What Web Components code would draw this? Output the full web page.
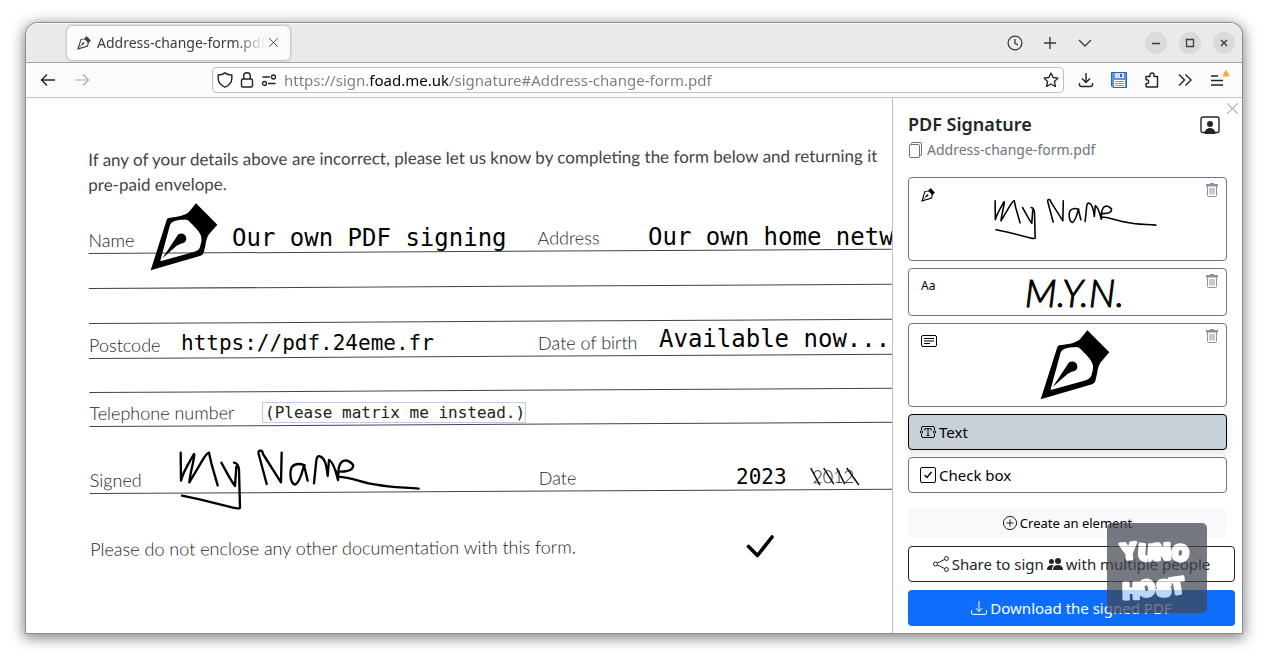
<!DOCTYPE html>
<html lang="en">
<head>
<meta charset="utf-8">
<title>PDF Signature</title>
<style>
  html { height: 100%; }
  body {
    margin: 0; height: 100%; box-sizing: border-box; padding: 23px 26px 29px;
    background: #fff; color: #212529; overflow: hidden;
    font: 15px/20px "Noto Sans", "Open Sans", sans-serif;
  }
</style>
</head>
<body>
<browser-window>
  <tab-strip slot="tabs"></tab-strip>
  <nav-bar slot="nav"></nav-bar>
  <pdf-page slot="page">
    <placed-item style="left:124px;top:105px"><ui-icon name="nib" style="--w:68px"></ui-icon></placed-item>
    <placed-item class="l" style="left:206px;top:126px">Our own PDF signing</placed-item>
    <placed-item class="l" style="left:622px;top:125px">Our own home netw</placed-item>
    <placed-item class="m" style="left:155px;top:231px">https://pdf.24eme.fr</placed-item>
    <placed-item class="l" style="left:633px;top:227px">Available now...</placed-item>
    <placed-item style="left:236px;top:304px"><text-note value="(Please matrix me instead.)"></text-note></placed-item>
    <placed-item style="left:153px;top:352px"><hand-signature style="--w:240px"></hand-signature></placed-item>
    <placed-item class="m" style="left:710px;top:365px">2023</placed-item>
    <placed-item style="left:719px;top:434px"><ui-icon name="tick" style="--w:30px"></ui-icon></placed-item>
  </pdf-page>
  <sign-panel slot="side"></sign-panel>
</browser-window>

<script>
const ICONS = {
  nib: ['270 218 204 204', '<path fill="currentColor" fill-rule="evenodd" d="M272 420 321 266Q324 262 332 262C352 260 372 257 386 246L408 219 472 283 447 312C440 322 438 334 436 346L431 367Q429 373 422 376ZM301 391C302 393 306 392 312 390L401 365Q418 360 420 350L424 334Q426 320 421 312C416 300 400 286 389 274Q383 267 372 268C350 268 334 272 330 284Z"/><path fill="currentColor" d="M307 384 350 319A15 15 0 0 1 378 320 15 15 0 0 1 372 337Q360 340 350 346Z"/>'],
  close: ['0 0 10 10', '<path d="M.3.3 9.7 9.7M9.7.3.3 9.7"/>'],
  wclose: ['0 0 10 10', '<path stroke-width="1.4" d="M2 2 8 8M8 2 2 8"/>'],
  wmin: ['0 0 10 10', '<path stroke-width="1.3" d="M1 5.5H9"/>'],
  wmax: ['0 0 10 10', '<path stroke-width="1.3" d="M1.5 1.5H8.5V8.5H1.5Z"/>'],
  back: ['0 0 16 16', '<path stroke-width="1.4" d="M1.5 8H15M7 2.5 1.5 8 7 13.5"/>'],
  forward: ['0 0 16 16', '<path stroke-width="1.2" d="M1 8H14.5M9 2.5 14.5 8 9 13.5"/>'],
  clock: ['0 0 16 16', '<circle stroke-width="1.3" cx="8" cy="8" r="6.9"/><path stroke-width="1.3" d="M8 4V8.3L11 10"/>'],
  plus: ['0 0 16 16', '<path stroke-width="1.4" d="M8 2V14M2 8H14"/>'],
  down: ['0 0 16 16', '<path stroke-width="1.4" d="M2 5 8 11 14 5"/>'],
  shield: ['0 0 16 16', '<path stroke-width="1.4" d="M8 .9C6 2.5 3.5 3 1.2 3V7C1.5 11 4 13.5 8 15.2C12 13.5 14.5 11 14.8 7V3C12.5 3 10 2.5 8 .9Z"/>'],
  lock: ['0 0 16 16', '<rect stroke-width="1.4" x="2.5" y="7" width="11" height="8" rx="1.5"/><path stroke-width="1.4" d="M4.7 7V4A3.3 3.3 0 0 1 11.3 4V7"/>'],
  perms: ['0 0 16 16', '<path stroke-width="1.3" d="M1.500 5H9M7 11.5H14.5"/><circle stroke-width="1.3" cx="12.5" cy="5" r="2"/><circle stroke-width="1.3" cx="3.5" cy="11.5" r="2"/>'],
  star: ['0 0 16 16', '<path stroke-width="1.3" stroke-linejoin="round" d="M8 1 10.1 5.5 15 6.1 11.4 9.5 12.4 14.5 8 12 3.6 14.5 4.6 9.5 1 6.1 5.9 5.5Z"/>'],
  save: ['0 0 16 16', '<path stroke-width="1.4" d="M8 1V10.5M4 6.5 8 10.5 12 6.5M1.500 11V13A2 2 0 0 0 3.500 14.500H12.500A2 2 0 0 0 14.500 13V11"/>'],
  floppy: ['0 0 16 16', '<path fill="#5b92e5" stroke="#2a62c0" d="M.5.5H15.5V15.5H2L.5 14Z"/><rect stroke="none" x="4" y="1" width="9" height="5" fill="#d3e0f5"/><rect stroke="none" x="9" y="2" width="2" height="3" fill="#2a62c0"/><rect stroke="none" x="3" y="8" width="11" height="7" fill="#fff"/><path stroke="#999" d="M4 9.500H13M4 11.500H13M4 13.500H13"/>'],
  puzzle: ['0 0 16 16', '<path stroke-width="1.4" stroke-linejoin="round" d="M2 4.5H6V3A2 2 0 0 1 10 3V4.5H13.5V15H3Q2 15 2 14V11.5H3.5A2 2 0 0 0 3.500 7.800H2Z"/>'],
  more: ['0 0 16 16', '<path stroke-width="1.4" d="M2 2.5 7.5 8 2 13.5M8.5 2.5 14 8 8.5 13.5"/>'],
  menu: ['0 0 20 16', '<path stroke-width="1.5" d="M1 4H8M1 8.5H13M1 13H13"/><path fill="#ffa436" stroke="#ffa436" stroke-linejoin="round" d="M13 4 16 -1.500 19 4Z"/>'],
  person: ['0 0 20 18', '<rect stroke-width="1.4" x="1" y="1" width="18" height="15.5" rx="1.8"/><circle fill="currentColor" cx="10" cy="8" r="3"/><path fill="currentColor" d="M4.500 18C4.500 13.500 8 12 10 12S15.500 13.500 15.500 18Z"/>'],
  files: ['0 0 16 16', '<path fill="currentColor" d="M13 0H6a2 2 0 0 0-2 2 2 2 0 0 0-2 2v10a2 2 0 0 0 2 2h7a2 2 0 0 0 2-2 2 2 0 0 0 2-2V2a2 2 0 0 0-2-2m0 13V4a2 2 0 0 0-2-2H5a1 1 0 0 1 1-1h7a1 1 0 0 1 1 1v10a1 1 0 0 1-1 1M3 4a1 1 0 0 1 1-1h7a1 1 0 0 1 1 1v10a1 1 0 0 1-1 1H4a1 1 0 0 1-1-1z" transform="translate(-1 0)"/>'],
  trash: ['0 0 14 16', '<path fill="currentColor" d="M1 2H5V1H9V2H13V4.500H1Z"/><path d="M2.500 4V13.5Q2.500 14.500 3.500 14.500H10.500Q11.500 14.500 11.500 13.500V4M5 6V12.500M7 6V12.500M9 6V12.500"/>'],
  card: ['0 0 16 16', '<rect x=".5" y="2.5" width="15" height="11" rx="1.5"/><path d="M3 5.5H13M3 8H13M3 10.5H9"/>'],
  textarea: ['0 0 16 16', '<path d="M1.5 6V4Q1.5 2.5 3 2.5H13Q14.5 2.5 14.5 4V6M1.5 10V12Q1.5 13.5 3 13.5H13Q14.5 13.5 14.5 12V10"/><circle cx="1.5" cy="8" r="1.2"/><circle cx="14.5" cy="8" r="1.2"/><path d="M4.800 6.500V4.700H11.200V6.500M8 4.700V11.500M6.500 11.500H9.500"/>'],
  check: ['0 0 16 16', '<rect x=".5" y=".5" width="15" height="15" rx="1.5"/><path stroke-width="1.4" d="M4.5 8 7 10.5 11.5 5"/>'],
  circleplus: ['0 0 16 16', '<circle cx="8" cy="8" r="7.5"/><path d="M8 4V12M4 8H12"/>'],
  share: ['0 0 16 16', '<circle cx="13.5" cy="2.5" r="2"/><circle cx="13.5" cy="13.5" r="2"/><circle cx="2.5" cy="8" r="2"/><path d="M4.3 7.1 11.7 3.4M4.3 8.9 11.7 12.6"/>'],
  people: ['0 0 16 16', '<path fill="currentColor" d="M7 14s-1 0-1-1 1-4 5-4 5 3 5 4-1 1-1 1zm4-6a3 3 0 1 0 0-6 3 3 0 0 0 0 6m-5.784 6A2.240 2.240 0 0 1 5 13c0-1.355.68-2.750 1.936-3.720A6.300 6.300 0 0 0 5 9c-4 0-5 3-5 4s1 1 1 1zM4.500 8a2.500 2.500 0 1 0 0-5 2.500 2.500 0 0 0 0 5"/>'],
  download: ['0 0 16 16', '<path stroke-linecap="round" d="M.5 10.4V12.9A1.5 1.5 0 0 0 2 14.4H14A1.5 1.5 0 0 0 15.5 12.9V10.4M8 1.5V11.3M4.9 8.3 8 11.4 11.1 8.3"/>'],
  tick: ['0 0 30 30', '<path stroke-width="3.6" stroke-linecap="round" stroke-linejoin="round" d="M3.5 14.5 12.5 23.5 27 5"/>'],
};

function define(name, html, init) {
  customElements.define(name, class extends HTMLElement {
    connectedCallback() {
      if (this.shadowRoot) return;
      const t = document.createElement('template');
      t.innerHTML = typeof html === 'function' ? html(this) : html;
      this.attachShadow({ mode: 'open' }).append(t.content.cloneNode(true));
      if (init) init(this);
    }
  });
}
const RESET = `*{box-sizing:border-box} button{font:inherit;color:inherit;background:none;border:0;padding:0;margin:0;display:inline-flex;align-items:center;justify-content:center}`;

define('ui-icon', el => {
  const [box, body] = ICONS[el.getAttribute('name')];
  return `<style>:host{display:inline-block;flex:none;line-height:0} svg{display:block;width:var(--w,16px);height:auto;overflow:visible}</style>
  <svg viewBox="${box}" fill="none" stroke="currentColor" aria-hidden="true">${body.replace(/<(path|circle) fill="currentColor"/g, '<$1 stroke="none" fill="currentColor"')}</svg>`;
});

/* Free-hand ink of the saved signature. */
define('hand-signature', `<style>:host{display:block} svg{display:block;width:var(--w);height:auto;overflow:visible}</style>
<svg viewBox="358 60 720 180" fill="none" stroke="#000" stroke-width="7" stroke-linecap="round" stroke-linejoin="round" role="img" aria-label="Signature">
<path d="M363 68 364 152C370 125 390 95 403 72L404 76C400 105 392 125 389 157L430 88Q444 66 448 68L455 100 474 166M485 98C500 125 515 155 526 168L530 110M523 98Q536 100 538 120L541 234Q535 237 520 233L420 208 367 197M621 162 597 72Q595 62 602 62T610 72L664 157 666 68M735 106Q708 96 696 112C689 128 692 160 706 164C718 160 728 126 733 106L744 152M763 160 770 92Q772 74 783 80C795 86 800 100 804 138L808 90Q822 96 835 150L837 116C842 88 862 84 880 104Q884 124 843 125M828 122 834 140C880 142 905 158 950 164C990 172 1030 172 1077 176"/></svg>`);

define('placed-item', `<style>
:host{position:absolute;white-space:nowrap;color:#000;font-family:"DejaVu Sans Mono",monospace;line-height:28px}
:host(.l){font-size:24px} :host(.m){font-size:21px}</style><slot></slot>`);

define('text-note', el => `<style>:host{display:block}
input{display:block;box-sizing:border-box;width:264px;height:21px;margin:0;padding:0 2px;border:1px solid #b8cdf0;background:#fff;color:#222;font:16px/18px "DejaVu Sans Mono",monospace;outline:0}</style>
<input type="text" aria-label="Text element" value="${el.getAttribute('value')}">`);

define('browser-window', `<style>
:host{display:flex;flex-direction:column;height:100%;box-sizing:border-box;border-radius:12px 12px 0 0;overflow:hidden;background:#fff;position:relative;
 box-shadow:0 0 0 1px #8f8f8f,0 3px 14px 2px rgba(0,0,0,.5)}
main{flex:1;display:flex;min-height:0}
::slotted([slot=page]){flex:1;min-width:0} ::slotted([slot=side]){flex:none}
</style><slot name="tabs"></slot><slot name="nav"></slot><main><slot name="page"></slot><slot name="side"></slot></main><yuno-badge></yuno-badge>`);

define('tab-strip', `<style>${RESET}
:host{display:flex;align-items:center;height:40px;box-sizing:border-box;background:#eaeaea;border-bottom:1px solid #a3a3a3;box-shadow:inset 0 1px #f8f8f8;padding:0 7px 0 41px;color:#3c3c3c}
.tab{display:flex;align-items:center;width:223px;height:34px;padding:0 12px 0 10px;gap:6px;background:#fbfbfb;border-radius:5px;box-shadow:0 0 3px rgba(0,0,0,.4);font-size:14px}
.t{flex:1;min-width:0;overflow:hidden;white-space:nowrap;line-height:18px;-webkit-mask-image:linear-gradient(90deg,#000 82%,transparent);mask-image:linear-gradient(90deg,#000 82%,transparent)}
.x{margin-left:-3px;width:10px}
.r{margin-left:auto;display:flex;align-items:center;gap:19px}
.w{display:flex;gap:12px;margin-left:33px}
.w button{width:22px;height:22px;border-radius:50%;background:#dadada}
</style>
<div class="tab"><ui-icon name="nib" style="--w:14px"></ui-icon><span class="t">Address-change-form.pdf</span><button class="x" aria-label="Close tab"><ui-icon name="close" style="--w:9px"></ui-icon></button></div>
<div class="r"><button aria-label="Recent"><ui-icon name="clock"></ui-icon></button><button aria-label="New tab"><ui-icon name="plus"></ui-icon></button><button aria-label="List tabs"><ui-icon name="down"></ui-icon></button>
<div class="w"><button aria-label="Minimise"><ui-icon name="wmin" style="--w:10px"></ui-icon></button><button aria-label="Maximise"><ui-icon name="wmax" style="--w:10px"></ui-icon></button><button aria-label="Close"><ui-icon name="wclose" style="--w:10px"></ui-icon></button></div></div>`);

define('nav-bar', `<style>${RESET}
:host{display:flex;align-items:center;height:35px;box-sizing:border-box;background:#fbfbfb;border-bottom:1px solid #c3c3c3;padding:0 12px 0 14px;color:#222}
.b{display:flex;gap:18px;margin-right:122px} .f{color:#aaa}
.u{flex:1;display:flex;align-items:center;gap:6px;height:26px;padding:0 4px;border:1px solid #c0c0c0;border-radius:4px;background:#fff}
input{flex:1;min-width:0;border:0;padding:0;margin:0 0 0 1px;outline:0;font:inherit;height:22px;color:transparent;
 background:linear-gradient(90deg,#7b7b7b 85px,#000 85px 165px,#7b7b7b 165px);-webkit-background-clip:text;background-clip:text}
.r{display:flex;gap:17px;margin-left:14px}
</style>
<div class="b"><button aria-label="Back"><ui-icon name="back"></ui-icon></button><button class="f" aria-label="Forward"><ui-icon name="forward"></ui-icon></button></div>
<div class="u"><ui-icon name="shield"></ui-icon><ui-icon name="lock"></ui-icon><ui-icon name="perms"></ui-icon><input type="text" aria-label="Address" value="https://sign.foad.me.uk/signature#Address-change-form.pdf"><button aria-label="Bookmark"><ui-icon name="star"></ui-icon></button></div>
<div class="r"><button aria-label="Downloads"><ui-icon name="save"></ui-icon></button><button aria-label="Save page"><ui-icon name="floppy"></ui-icon></button><button aria-label="Extensions"><ui-icon name="puzzle"></ui-icon></button><button aria-label="More tools"><ui-icon name="more"></ui-icon></button><button aria-label="Menu"><ui-icon name="menu" style="--w:20px"></ui-icon></button></div>`);

/* The scan lies slightly askew on the page. */
define('pdf-page', `<style>
:host{display:block;position:relative;overflow:hidden;background:#fff}
.scan{padding:49px 0 0;margin-left:63px;transform:rotate(-.3deg);transform-origin:0 50%;color:#222;font:300 18px/25px Lato,sans-serif;white-space:nowrap}
p{margin:0;height:50px;font-size:17px;font-weight:400;color:#444}
.row{display:grid;grid-template-columns:449px 1fr;align-items:end;height:35px;box-sizing:border-box;border-bottom:1px solid #444}
.row.first{height:57px}.row.low{height:34px}.row.tall{height:67px}
.old{position:relative;margin-left:236px}
svg{position:absolute;left:0;top:0;overflow:visible}
.c{display:flex}
footer{margin-top:43px}
</style>
<div class="scan">
<p>If any of your details above are incorrect, please let us know by completing the form below and returning it<br>pre-paid envelope.</p>
<div class="row first"><span>Name</span><span>Address</span></div>
<div class="row"></div><div class="row"></div>
<div class="row"><span>Postcode</span><span>Date of birth</span></div>
<div class="row low"></div>
<div class="row low"><span>Telephone number</span></div>
<div class="row tall"><span>Signed</span><span class="c">Date<span class="old">2012<svg width="50" height="22" stroke="#111" stroke-width="1.5" aria-hidden="true"><path d="M-2 4 7 21M11 4 21 20M24 4 32 20M34 4 46 21"/></svg></span></span></div>
<footer>Please do not enclose any other documentation with this form.</footer>
</div><slot></slot>`);

define('sign-card', el => `<style>${RESET}
:host{display:block;position:relative;height:var(--h,84px)}
.main{width:100%;height:100%;display:flex;align-items:flex-start;justify-content:flex-start;padding:8px 14px 8px 12px;border:1px solid #6c757d;border-radius:4px;background:#fff;color:#000}
.k{width:16px;font-size:12px;line-height:18px;height:18px;display:flex;align-items:center}
.art{flex:1;align-self:stretch;display:flex;align-items:center;justify-content:center}
.del{position:absolute;right:8px;top:5px;color:#8d949b}
</style><button class="main"><span class="k"><slot name="kind"></slot></span><span class="art"><slot></slot></span></button>
<button class="del" aria-label="Delete"><ui-icon name="trash" style="--w:14px"></ui-icon></button>`);

define('sign-panel', `<style>${RESET}
:host{display:flex;flex-direction:column;width:350px;box-sizing:border-box;border-left:1px solid #c0c0c0;background:#fff;padding:14px 7px 7px 15px;position:relative}
.top,.tools,.new{margin-right:8px}
.top{display:flex;align-items:flex-start;justify-content:space-between;padding-right:7px}
h1{margin:0;font-size:18px;line-height:24px;font-weight:600}
.file{display:flex;align-items:center;gap:3px;margin:4px 0 0;color:#6c757d;font-size:14px;line-height:20px}
.x{position:absolute;right:4px;top:5px;color:#aaa}
.p{margin-top:4px}
.tools{display:flex;flex-direction:column;gap:7px;margin-top:17px}
.tool,.share,.dl{height:36px;border-radius:4px;gap:3px}
.tool{justify-content:flex-start;padding:0 11px;border:1px solid #6c757d;color:#000}
.tool.on{background:#c8d0d8;border-color:#000;box-shadow:0 4px 8px rgba(0,0,0,.1)}
.foot{display:flex;flex-direction:column;gap:8px;margin-top:auto}
.new{height:30px;background:#f8f9fa;border-radius:4px;color:#000;font-size:13px;gap:3px}
.share{border:1px solid #212529;white-space:nowrap}
.dl{background:#0d6efd;color:#fff}
.ini{font:italic 300 38px/40px Lato,sans-serif;color:#000;-webkit-text-stroke:1px #000}
</style>
<button class="x" aria-label="Close panel"><ui-icon name="close" style="--w:11px"></ui-icon></button>
<div class="top"><div><h1>PDF Signature</h1><p class="file"><ui-icon name="files" style="--w:16px"></ui-icon>Address-change-form.pdf</p></div><button class="p" aria-label="Signatories"><ui-icon name="person" style="--w:20px"></ui-icon></button></div>
<div class="tools">
<sign-card><ui-icon slot="kind" name="nib" style="--w:14px"></ui-icon><hand-signature style="--w:162px"></hand-signature></sign-card>
<sign-card style="--h:48px"><span slot="kind">Aa</span><span class="ini">M.Y.N.</span></sign-card>
<sign-card><ui-icon slot="kind" name="card"></ui-icon><ui-icon name="nib" style="--w:70px"></ui-icon></sign-card>
<button class="tool on" aria-pressed="true"><ui-icon name="textarea"></ui-icon>Text</button>
<button class="tool"><ui-icon name="check"></ui-icon>Check box</button>
</div>
<div class="foot">
<button class="new"><ui-icon name="circleplus" style="--w:14px"></ui-icon>Create an element</button>
<button class="share"><ui-icon name="share"></ui-icon>Share to sign <ui-icon name="people"></ui-icon> with multiple people</button>
<button class="dl"><ui-icon name="download"></ui-icon>Download the signed PDF</button>
</div>`);

define('yuno-badge', `<style>
:host{position:absolute;right:35px;bottom:20px;opacity:.72}
a{display:block;width:100px;height:90px;border-radius:5px;background:#424650}
svg{display:block} text{font:900 22px Inter,sans-serif;fill:#fff;stroke:#fff;stroke-width:3;stroke-linejoin:round}
</style><a href="#" aria-label="YunoHost"><svg width="100" height="90" viewBox="0 0 100 90"><text x="14" y="37" rotate="-6 4 -3 6">YUNO</text><text x="15" y="73" rotate="4 -4 6 -4" transform="rotate(-5 50 64)">HOST</text></svg></a>`);
</script>
</body>
</html>
